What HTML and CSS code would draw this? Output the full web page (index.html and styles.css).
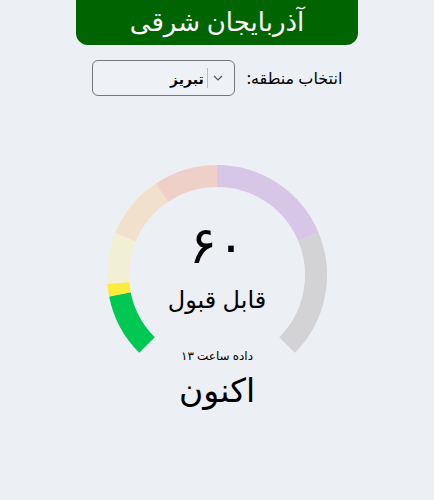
FILE: index.html
```html
<!DOCTYPE html>
<html lang="fa" dir="rtl">
<head>
  <meta charset="UTF-8" />
  <meta name="viewport" content="width=device-width, initial-scale=1.0"/>
  <title>کیفیت هوا</title>
  <link rel="stylesheet" href="styles.css">
</head>
<body>
  <div class="header">آذربایجان شرقی</div>

  <div class="region-row">
    <label class="region-label">انتخاب منطقه:</label>
    <div class="region-select">
      <span class="chevron">
        <svg width="10" height="6" viewBox="0 0 10 6"><path d="M1 1 L5 5 L9 1" fill="none" stroke="#555" stroke-width="1.2"/></svg>
      </span>
      <span class="divider"></span>
      <span class="region-value">تبریز</span>
    </div>
  </div>

  <div class="gauge">
    <svg class="gauge-arc" width="220" height="220" viewBox="0 0 220 220">
      <g fill="none" stroke-width="22">
        <path d="M40 180 A99 99 0 0 1 12.9 129.3" stroke="#00c853"/>
        <path d="M12.9 129.3 A99 99 0 0 1 11.3 117.8" stroke="#ffeb3b"/>
        <path d="M11.3 117.8 A99 99 0 0 1 18.5 72.1" stroke="#f2f0d4"/>
        <path d="M18.5 72.1 A99 99 0 0 1 55 27.7" stroke="#f1e0cc"/>
        <path d="M55 27.7 A99 99 0 0 1 110 11" stroke="#efd0c9"/>
        <path d="M110 11 A99 99 0 0 1 201.5 72.1" stroke="#d8c6e6"/>
        <path d="M201.5 72.1 A99 99 0 0 1 180 180" stroke="#d3d2d4"/>
      </g>
    </svg>
    <div class="aqi-value">۶۰</div>
    <div class="aqi-status">قابل قبول</div>
    <div class="aqi-time">داده ساعت ۱۳</div>
  </div>

  <div class="now">اکنون</div>
</body>
</html>
```

FILE: styles.css
```css
* {
  box-sizing: border-box;
  font-family: "Noto Sans", "DejaVu Sans", sans-serif;
}

body {
  margin: 0;
  background: #eceff4;
  color: #000;
}

.header {
  width: 65%;
  height: 45px;
  margin: 0 auto;
  background: #006400;
  color: #fff;
  border-radius: 0 0 12px 12px;
  text-align: center;
  font-size: 26px;
  line-height: 42px;
}

.region-row {
  display: flex;
  justify-content: center;
  align-items: center;
  gap: 12px;
  margin-top: 15px;
}

.region-label {
  font-size: 16px;
}

.region-select {
  display: flex;
  align-items: center;
  width: 143px;
  height: 36px;
  border: 1px solid #777;
  border-radius: 6px;
  background: #eef1f6;
  padding-right: 10px;
}

.chevron {
  display: flex;
  width: 12px;
  justify-content: center;
}

.divider {
  width: 1px;
  height: 20px;
  background: #bbb;
  margin: 0 4px 0 3px;
}

.region-value {
  font-size: 14px;
  font-weight: bold;
}

.gauge {
  position: relative;
  width: 220px;
  height: 220px;
  margin: 69px auto 0;
  display: flex;
  flex-direction: column;
  align-items: center;
}

.gauge-arc {
  position: absolute;
  top: 0;
  left: 0;
}

.aqi-value {
  margin-top: 44px;
  font-size: 52px;
  letter-spacing: 14px;
  line-height: 68px;
}

.aqi-status {
  font-size: 24px;
  line-height: 34px;
  margin-top: 5px;
}

.aqi-time {
  font-size: 12px;
  line-height: 16px;
  margin-top: 32px;
}

.now {
  text-align: center;
  font-size: 33px;
  line-height: 40px;
  margin-top: -15px;
}
```
